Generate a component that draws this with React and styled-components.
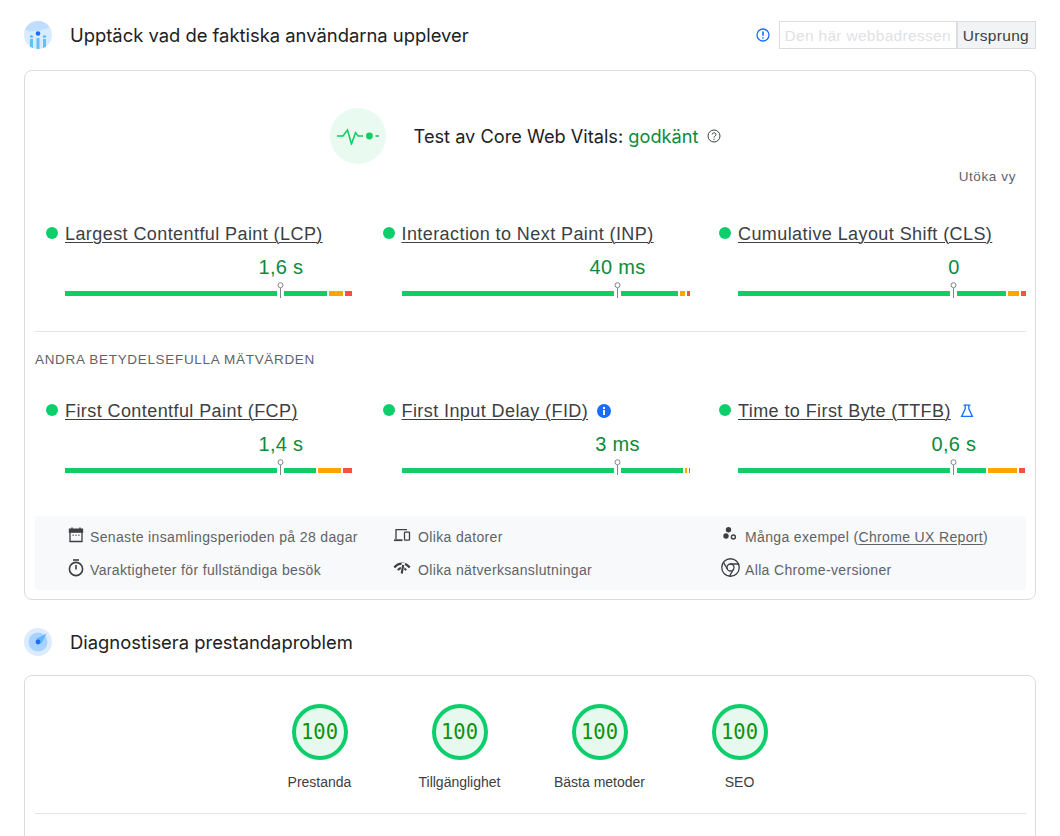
import React from "react";
import styled, { createGlobalStyle } from "styled-components";
import { Chrome } from "lucide-react";

const GlobalStyle = createGlobalStyle`
  html, body {
    margin: 0;
    padding: 0;
    height: 836px;
    overflow: hidden;
    background: #fff;
    font-family: "Liberation Sans", Arial, sans-serif;
  }
`;

const Page = styled.div`
  height: 836px;
  overflow: hidden;
  box-sizing: border-box;
  padding: 20px 24px 0;
`;

const SectionHeader = styled.header`
  display: flex;
  align-items: center;
  height: 30px;
  margin-top: ${(p) => p.$top || 0}px;
  margin-bottom: ${(p) => p.$gap}px;
`;

const SectionIcon = styled.div`
  width: 28px;
  height: 28px;
  flex: none;
  margin-right: 18px;
`;

const SectionTitle = styled.h2`
  flex: 1;
  margin: 0;
  font: 400 18.4px Inter, sans-serif;
  color: #202124;
`;

const Toggle = styled.div`
  display: flex;
  align-items: center;
`;

const ToggleInfo = styled.div`
  display: flex;
  margin-right: 9px;
`;

const ToggleButton = styled.div`
  height: 28px;
  box-sizing: border-box;
  border: 1px solid #dadce0;
  padding: 1px ${(p) => (p.$active ? 6 : 5)}px 0 5px;
  display: flex;
  align-items: center;
  font-size: 15.5px;
  letter-spacing: 0.3px;
  color: ${(p) => (p.$active ? "#3c4043" : "#dfe1e5")};
  background: ${(p) => (p.$active ? "#f1f3f4" : "#fff")};
`;

const Card = styled.section`
  border: 1px solid #dadce0;
  border-radius: 8px;
  box-sizing: border-box;
  padding: ${(p) => p.$pad};
  height: ${(p) => p.$height}px;
`;

const Verdict = styled.div`
  display: flex;
  align-items: center;
  justify-content: center;
  margin-left: -10px;
  height: 56px;
`;

const VerdictBadge = styled.div`
  width: 56px;
  height: 56px;
  border-radius: 50%;
  background: #e9fbf1;
  display: flex;
  align-items: center;
  justify-content: center;
  margin-right: 28px;
`;

const VerdictText = styled.div`
  font: 400 18.2px Inter, sans-serif;
  color: #202124;
  margin-right: 9px;
`;

const Pass = styled.span`
  color: #0d8a3b;
`;

const Expand = styled.div`
  text-align: right;
  font-size: 13.5px;
  letter-spacing: 0.6px;
  color: #5f6368;
  padding-right: 10px;
  margin-top: 5px;
  line-height: 16px;
`;

const MetricGrid = styled.div`
  display: grid;
  grid-template-columns: repeat(3, 336.5px);
  padding-left: 11px;
  margin-top: ${(p) => p.$top}px;
`;

const Metric = styled.div`
  width: 307px;
`;

const MetricHead = styled.div`
  display: flex;
  align-items: center;
  height: 22px;
`;

const Dot = styled.span`
  width: 12px;
  height: 12px;
  border-radius: 50%;
  background: #0cce6b;
  margin-right: 7px;
  margin-top: -3px;
  flex: none;
`;

const MetricName = styled.a`
  font-size: 18px;
  letter-spacing: 0.42px;
  color: #3c4043;
  text-decoration: underline;
  text-underline-offset: 2px;
  text-decoration-thickness: 1px;
`;

const MetricFlag = styled.span`
  display: flex;
  margin-left: 9px;
`;

const MetricBody = styled.div`
  margin-left: 19px;
  position: relative;
`;

const MetricValue = styled.div`
  width: 120px;
  margin-left: calc(75% - 60px);
  text-align: center;
  font-size: 20px;
  line-height: 24px;
  letter-spacing: 0.3px;
  color: #0d8a3b;
  margin-top: 10px;
`;

const Track = styled.div`
  display: flex;
  gap: 2px;
  height: 5px;
  margin-top: 12px;
  position: relative;
`;

const Segment = styled.span`
  background: ${(p) => p.$color};
`;

const Marker = styled.span`
  position: absolute;
  left: 212px;
  top: -9px;
  width: 7px;
  height: 16px;
  background: linear-gradient(to bottom, transparent 9px, #fff 9px);
  display: flex;
  justify-content: center;
`;

const Divider = styled.hr`
  border: 0;
  border-top: 1px solid #e3e4e6;
  margin: ${(p) => p.$margin};
`;

const OtherTitle = styled.div`
  font-size: 13.5px;
  letter-spacing: 0.68px;
  line-height: 16px;
  color: #5f6368;
  margin-top: 20px;
`;

const Facts = styled.div`
  display: grid;
  grid-template-columns: 326px 328px 1fr;
  grid-auto-rows: 33px;
  align-items: center;
  background: #f8f9fa;
  border-radius: 4px;
  padding: 4px 0 4px 33px;
  margin-top: 43px;
  height: 74px;
  box-sizing: border-box;
`;

const Fact = styled.div`
  display: flex;
  align-items: center;
  font-size: 14px;
  letter-spacing: 0.35px;
  color: #5f6368;
`;

const FactIcon = styled.span`
  width: 16px;
  height: 16px;
  margin-right: ${(p) => p.$gap}px;
  margin-top: -4px;
  display: flex;
  align-items: center;
  justify-content: center;
  color: #3c4043;
  flex: none;

  svg {
    flex: none;
  }
`;

const FactLink = styled.a`
  text-decoration: underline;
  text-underline-offset: 2px;
`;

const Gauges = styled.div`
  display: flex;
  justify-content: center;
  margin-top: 4px;
  margin-left: -2px;
`;

const Gauge = styled.div`
  width: 140px;
  display: flex;
  flex-direction: column;
  align-items: center;
`;

const GaugeRing = styled.div`
  width: 56px;
  height: 56px;
  box-sizing: border-box;
  border: 4px solid #0cce6b;
  border-radius: 50%;
  background: #e7f9ef;
  display: flex;
  align-items: center;
  justify-content: center;
  font: 400 20.5px "DejaVu Sans Mono", monospace;
  color: #0f920f;
`;

const GaugeLabel = styled.div`
  margin-top: 14px;
  font-size: 14px;
  line-height: 16px;
  color: #3c4043;
`;

const GREEN = "#12cc64";
const ORANGE = "#ffa400";
const RED = "#ff4e42";

const fieldMetrics = [
  { name: "Largest Contentful Paint (LCP)", value: "1,6 s", parts: [262, 14, 7] },
  { name: "Interaction to Next Paint (INP)", value: "40 ms", parts: [276, 5, 3] },
  { name: "Cumulative Layout Shift (CLS)", value: "0", parts: [271, 11, 5] },
];

const otherMetrics = [
  { name: "First Contentful Paint (FCP)", value: "1,4 s", parts: [251, 23, 9] },
  { name: "First Input Delay (FID)", value: "3 ms", parts: [281, 2, 1], flag: "info" },
  { name: "Time to First Byte (TTFB)", value: "0,6 s", parts: [248, 29, 6], flag: "lab" },
];

function InfoFilled() {
  return (
    <svg width="14" height="14" viewBox="0 0 14 14">
      <circle cx="7" cy="7" r="7" fill="#1a6dff" />
      <rect x="6" y="6" width="2" height="5" fill="#fff" />
      <rect x="6" y="3" width="2" height="2" fill="#fff" />
    </svg>
  );
}

function Flask() {
  return (
    <svg width="14" height="14" viewBox="0 0 14 14" fill="none" stroke="#1a6dff" strokeWidth="1.3">
      <path d="M3.5 1.2h7M5.2 1.2v3.6L1.6 12.4h10.8L8.8 4.8V1.2" />
    </svg>
  );
}

function MetricCell({ metric }) {
  const [good, mid, bad] = metric.parts;
  return (
    <Metric>
      <MetricHead>
        <Dot />
        <MetricName>{metric.name}</MetricName>
        {metric.flag && (
          <MetricFlag>{metric.flag === "info" ? <InfoFilled /> : <Flask />}</MetricFlag>
        )}
      </MetricHead>
      <MetricBody>
        <MetricValue>{metric.value}</MetricValue>
        <Track>
          <Segment $color={GREEN} style={{ width: good }} />
          <Segment $color={ORANGE} style={{ width: mid }} />
          <Segment $color={RED} style={{ width: bad }} />
          <Marker>
            <svg width="7" height="16" viewBox="0 0 7 16" fill="none" stroke="#80868b">
              <circle cx="3.5" cy="3.2" r="2.5" fill="#fff" />
              <path d="M3.5 6v10" />
            </svg>
          </Marker>
        </Track>
      </MetricBody>
    </Metric>
  );
}

function CruxLogo() {
  return (
    <svg width="28" height="28" viewBox="0 0 28 28">
      <clipPath id="crux-clip">
        <circle cx="14" cy="14" r="14" />
      </clipPath>
      <g clipPath="url(#crux-clip)">
        <rect width="28" height="28" fill="#d9ecff" />
        <path d="M0 8C3 1 9-2 16-1c6 1 9 3 11 7-3 0-5 3-8 2-2 3-6 1-8 2-4 1-7 1-11-2Z" fill="#bfdeff" />
        <circle cx="14" cy="12.5" r="2.3" fill="#1a6dff" />
        <g fill="#5fc0ff">
          <circle cx="7.5" cy="15.5" r="1.6" />
          <rect x="6" y="18" width="3" height="10" />
          <circle cx="20.5" cy="15.5" r="1.6" />
          <rect x="19" y="18" width="3" height="10" />
          <rect x="12.5" y="17" width="3" height="11" />
        </g>
      </g>
    </svg>
  );
}

function RadarLogo() {
  return (
    <svg width="28" height="28" viewBox="0 0 28 28">
      <circle cx="14" cy="14" r="14" fill="#dcecff" />
      <circle cx="14" cy="14" r="9.5" fill="#a8d2ff" />
      <path d="M12 11 22.5 5.5 17 16Z" fill="#5db4ff" />
      <circle cx="14" cy="14" r="2.4" fill="#1a6dff" />
    </svg>
  );
}

function OutlineInfo() {
  return (
    <svg width="14" height="14" viewBox="0 0 14 14" fill="none" stroke="#1a6dff" strokeWidth="1.3">
      <circle cx="7" cy="7" r="6" />
      <path d="M7 3.6v4.2M7 9.2v1.2" strokeWidth="1.6" />
    </svg>
  );
}

function Help() {
  return (
    <svg width="14" height="14" viewBox="0 0 14 14" fill="none" stroke="#3c4043">
      <circle cx="7" cy="7" r="6" />
      <path d="M5.1 5.6C5.1 3.2 9 3.3 9 5.5c0 1.5-2 1.5-2 3" />
      <path d="M7 9.6v1.2" />
    </svg>
  );
}

function Calendar() {
  return (
    <svg width="16" height="16" viewBox="0 0 16 16" fill="none" stroke="#3c4043" strokeWidth="1.3">
      <path d="M2 3h12v11.5H2Z" />
      <path d="M1.5 2.2h13v3h-13Z" fill="#3c4043" />
      <path d="M4 .5v2M12 .5v2" strokeWidth="1.4" />
      <path d="M4.5 8.2h1.4M7.4 8.2h1.4M10.2 8.2h1.4" strokeWidth="1" />
    </svg>
  );
}

function Stopwatch() {
  return (
    <svg width="16" height="18" viewBox="0 0 16 18" fill="none" stroke="#3c4043" strokeWidth="1.6">
      <path d="M5 1h6" />
      <circle cx="8" cy="10" r="6.6" />
      <path d="M8 6v4.5" />
    </svg>
  );
}

function Devices() {
  return (
    <svg width="18" height="16" viewBox="0 0 17 16" fill="none" stroke="#3c4043" strokeWidth="1.3">
      <path d="M2.5 12V2.7h11" />
      <path d="M.5 13.2h8.5" strokeWidth="1.8" />
      <rect x="11" y="5.2" width="5" height="8" rx=".6" />
    </svg>
  );
}

function Network() {
  return (
    <svg width="18" height="16" viewBox="0 0 17 16" fill="none" stroke="#3c4043">
      <path d="M.8 7.5C5 2.4 12 2.4 16.2 7.5" strokeWidth="2.3" />
      <path d="M4.3 10.2C6.5 7.4 10.5 7.4 12.7 10.2" strokeWidth="2" />
      <path d="M10 3 8.4 13" stroke="#f8f9fa" strokeWidth="3.4" />
      <path d="M9.7 5 8.2 13.5" strokeWidth="2.1" />
    </svg>
  );
}

function Dots() {
  return (
    <svg width="16" height="16" viewBox="0 0 16 16" fill="#3c4043">
      <circle cx="6.5" cy="2.8" r="2.7" />
      <circle cx="4" cy="9" r="2.7" />
      <circle cx="11.4" cy="10" r="2" fill="none" stroke="#3c4043" strokeWidth="1.4" />
    </svg>
  );
}

function Pulse() {
  return (
    <svg width="42" height="18" viewBox="0 0 42 18" fill="none" stroke="#12cc64" strokeWidth="1.6">
      <path d="M0 9h6l4.5-6 4 14 4-11.4 2.5 3.4h5" />
      <circle cx="32.4" cy="9" r="3.4" fill="#12cc64" stroke="none" />
      <path d="M38.5 9H42" />
    </svg>
  );
}

export default function App() {
  return (
    <Page>
      <GlobalStyle />
      <SectionHeader $gap={20}>
        <SectionIcon>
          <CruxLogo />
        </SectionIcon>
        <SectionTitle>Upptäck vad de faktiska användarna upplever</SectionTitle>
        <Toggle>
          <ToggleInfo>
            <OutlineInfo />
          </ToggleInfo>
          <ToggleButton>Den här webbadressen</ToggleButton>
          <ToggleButton $active>Ursprung</ToggleButton>
        </Toggle>
      </SectionHeader>

      <Card $pad="37px 9px 9px 10px" $height={530}>
        <Verdict>
          <VerdictBadge>
            <Pulse />
          </VerdictBadge>
          <VerdictText>
            Test av Core Web Vitals: <Pass>godkänt</Pass>
          </VerdictText>
          <Help />
        </Verdict>
        <Expand>Utöka vy</Expand>
        <MetricGrid $top={38}>
          {fieldMetrics.map((m) => (
            <MetricCell key={m.name} metric={m} />
          ))}
        </MetricGrid>
        <Divider $margin="35px 0 0" />
        <OtherTitle>ANDRA BETYDELSEFULLA MÄTVÄRDEN</OtherTitle>
        <MetricGrid $top={32}>
          {otherMetrics.map((m) => (
            <MetricCell key={m.name} metric={m} />
          ))}
        </MetricGrid>
        <Facts>
          <Fact>
            <FactIcon $gap={6}>
              <Calendar />
            </FactIcon>
            Senaste insamlingsperioden på 28 dagar
          </Fact>
          <Fact>
            <FactIcon $gap={8}>
              <Devices />
            </FactIcon>
            Olika datorer
          </Fact>
          <Fact>
            <FactIcon $gap={7}>
              <Dots />
            </FactIcon>
            <span>
              Många exempel (<FactLink>Chrome UX Report</FactLink>)
            </span>
          </Fact>
          <Fact>
            <FactIcon $gap={6}>
              <Stopwatch />
            </FactIcon>
            Varaktigheter för fullständiga besök
          </Fact>
          <Fact>
            <FactIcon $gap={8}>
              <Network />
            </FactIcon>
            Olika nätverksanslutningar
          </Fact>
          <Fact>
            <FactIcon $gap={7}>
              <Chrome size={21} strokeWidth={1.5} />
            </FactIcon>
            Alla Chrome-versioner
          </Fact>
        </Facts>
      </Card>

      <SectionHeader $top={27} $gap={18}>
        <SectionIcon>
          <RadarLogo />
        </SectionIcon>
        <SectionTitle>Diagnostisera prestandaproblem</SectionTitle>
      </SectionHeader>

      <Card $pad="24px 9px 0 10px" $height={300}>
        <Gauges>
          {["Prestanda", "Tillgänglighet", "Bästa metoder", "SEO"].map((label) => (
            <Gauge key={label}>
              <GaugeRing>100</GaugeRing>
              <GaugeLabel>{label}</GaugeLabel>
            </Gauge>
          ))}
        </Gauges>
        <Divider $margin="23px 0 0" />
      </Card>
    </Page>
  );
}
